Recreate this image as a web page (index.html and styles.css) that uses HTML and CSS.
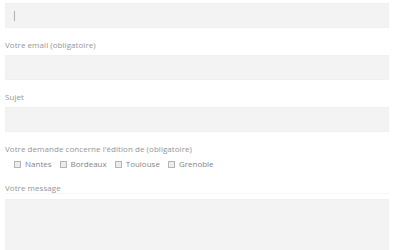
FILE: index.html
```html
<!DOCTYPE html>
<html lang="fr">
<head>
  <meta charset="UTF-8" />
  <title>Contact</title>
  <link rel="stylesheet" href="styles.css">
</head>
<body>
  <form class="contact-form">
    <div class="field first">
      <input type="text" class="text-input" />
      <span class="caret"></span>
    </div>

    <div class="field">
      <label class="field-label">Votre email (obligatoire)</label>
      <input type="email" class="text-input" />
    </div>

    <div class="field">
      <label class="field-label">Sujet</label>
      <input type="text" class="text-input" />
    </div>

    <div class="field">
      <label class="field-label">Votre demande concerne l'édition de (obligatoire)</label>
      <div class="choices">
        <label class="choice"><span class="box"></span>Nantes</label>
        <label class="choice"><span class="box"></span>Bordeaux</label>
        <label class="choice"><span class="box"></span>Toulouse</label>
        <label class="choice"><span class="box"></span>Grenoble</label>
      </div>
    </div>

    <div class="field message">
      <label class="field-label">Votre message</label>
      <textarea class="text-area"></textarea>
    </div>
  </form>
</body>
</html>
```

FILE: styles.css
```css
body {
  margin: 0;
  background: #fff;
  font-family: "Open Sans", "Liberation Sans", sans-serif;
  color: #959595;
  overflow: hidden;
}

.contact-form {
  padding: 3px 11px 0 5px;
}

.field {
  margin-top: 12px;
  position: relative;
}

.field.first {
  margin-top: 0;
}

.field-label {
  display: block;
  font-size: 8px;
  letter-spacing: 0.05px;
  line-height: 10px;
  height: 10px;
  margin-bottom: 5px;
}

.text-input,
.text-area {
  display: block;
  box-sizing: border-box;
  width: 100%;
  height: 25px;
  margin: 0;
  border: 1px solid #f0f0f0;
  background: #f3f3f3;
  outline: none;
}

.caret {
  position: absolute;
  left: 9px;
  top: 8px;
  width: 1px;
  height: 10px;
  background: #b0b0b0;
}

.choices {
  display: flex;
  gap: 8px;
  padding-left: 9px;
  margin-top: 4px;
  font-size: 8px;
  line-height: 10px;
  color: #858585;
}

.choice {
  display: flex;
  align-items: center;
  gap: 4px;
}

.box {
  width: 5px;
  height: 5px;
  border: 1px solid #b5b5b5;
  background: #ececec;
}

.field.message {
  margin-top: 14px;
}

.field.message .field-label {
  margin-bottom: 5px;
  border-bottom: 1px solid #f6f6f6;
}

.text-area {
  height: 60px;
  resize: none;
}
```
